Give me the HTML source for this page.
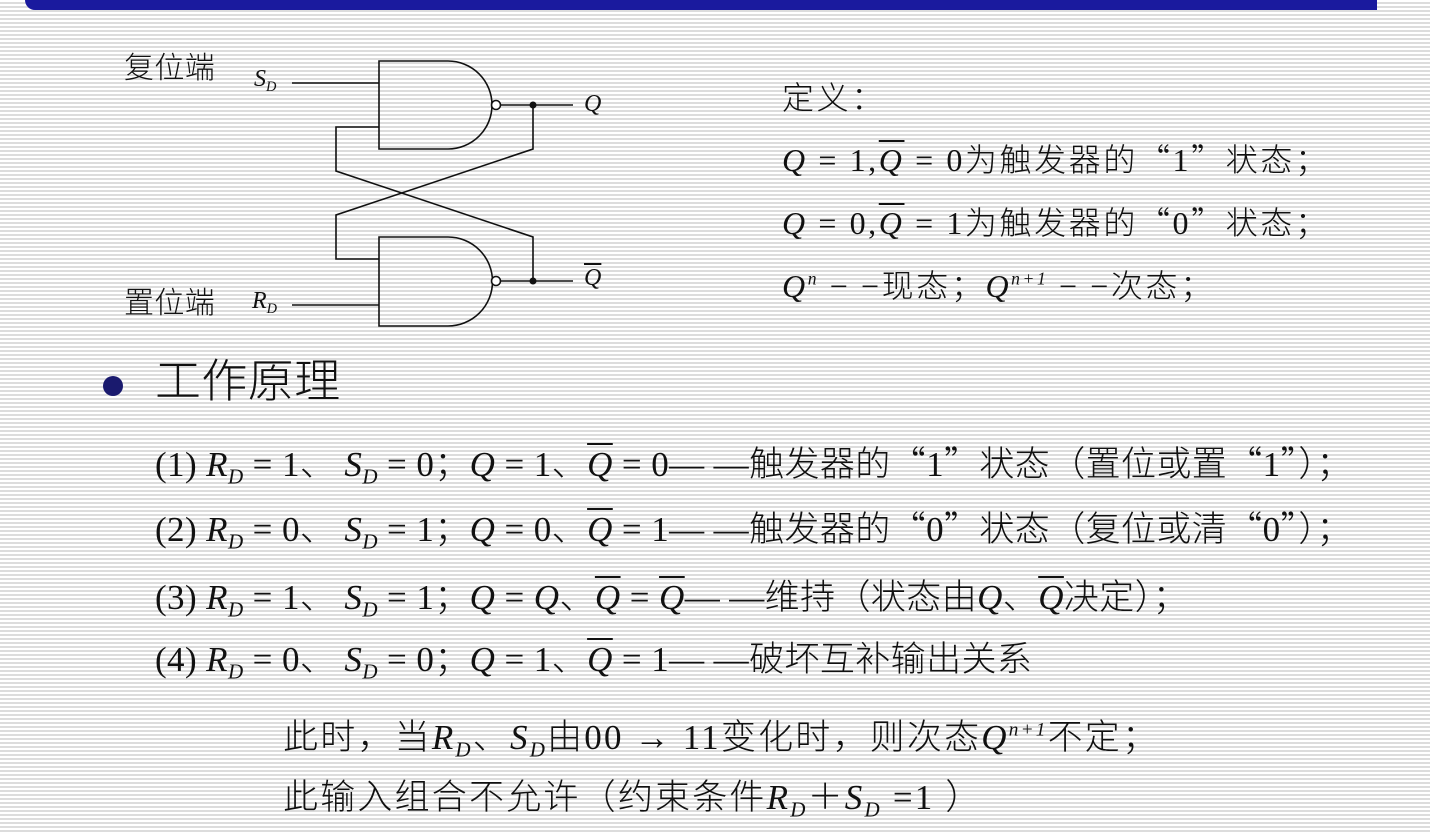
<!DOCTYPE html>
<html><head><meta charset="utf-8"><style>
html,body{margin:0;padding:0}
body{width:1430px;height:833px;overflow:hidden;position:relative;
background:repeating-linear-gradient(to bottom,#ffffff 0,#ffffff 2px,#dcdcdc 2px,#dcdcdc 4px);
font-family:"Liberation Serif","Noto Serif CJK SC",serif;color:#111}
.bar{position:absolute;left:25px;top:0;width:1352px;height:10px;background:#1a1a9e;border-bottom-left-radius:30px}
.t{position:absolute;white-space:nowrap;line-height:1}
.m{font-style:italic;font-family:"Liberation Serif",serif}
sub{font-size:0.6em;vertical-align:-0.35em;font-style:italic}
sup{font-size:0.55em;vertical-align:0.7em;font-style:italic}
.ob{text-decoration:overline;text-decoration-thickness:2px}
.c{font-family:"Liberation Serif","Noto Sans CJK SC",sans-serif;font-weight:300;letter-spacing:0.4px}
.k{font-family:"Noto Sans CJK SC",sans-serif}
.r{letter-spacing:2.6px}
.b{letter-spacing:2.2px}
</style></head><body>
<div class="bar"></div>
<div class="t c" style="left:124px;top:54px;font-size:30px">复位端</div>
<div class="t c" style="left:124px;top:289px;font-size:30px">置位端</div>
<svg style="position:absolute;left:0;top:0" width="1430" height="833">
<g fill="none" stroke="#111" stroke-width="1.6">
<path d="M448 61 H379 V149 H448 A44 44 0 0 0 448 61 Z"/>
<path d="M448 237 H379 V326 H448 A44.5 44.5 0 0 0 448 237 Z"/>
<circle cx="496" cy="105" r="4.5" fill="#fff"/>
<circle cx="496" cy="281" r="4.5" fill="#fff"/>
<path d="M292 83 H379 M500 105 H573 M500 281 H573 M292 305 H379"/>
<path d="M379 127 H336 V171 L533 237 V281"/>
<path d="M533 105 V149 L336 215 V259 H379"/>
</g>
<circle cx="533" cy="105" r="3.5" fill="#111"/>
<circle cx="533" cy="281" r="3.5" fill="#111"/>
</svg>
<div class="t m" style="left:254px;top:67px;font-size:24px">S<sub>D</sub></div>
<div class="t m" style="left:252px;top:289px;font-size:24px">R<sub>D</sub></div>
<div class="t m" style="left:584px;top:92px;font-size:24px">Q</div>
<div class="t m ob" style="left:584px;top:266px;font-size:24px">Q</div>

<div class="t c r" style="left:782px;top:80px;font-size:32px">定义<span class="k">：</span></div>
<div class="t c r" style="left:782px;top:142px;font-size:32px"><span class="m">Q</span> = 1,<span class="m ob">Q</span> = 0为触发器的<span class="k">“</span>1<span class="k">”</span>状态<span class="k">；</span></div>
<div class="t c r" style="left:782px;top:205px;font-size:32px"><span class="m">Q</span> = 0,<span class="m ob">Q</span> = 1为触发器的<span class="k">“</span>0<span class="k">”</span>状态<span class="k">；</span></div>
<div class="t c r" style="left:782px;top:268px;font-size:32px"><span class="m">Q<sup>n</sup></span> − −现态<span class="k">；</span><span class="m">Q<sup>n+1</sup></span> − −次态<span class="k">；</span></div>

<div style="position:absolute;left:103px;top:376px;width:20px;height:20px;border-radius:50%;background:#1a1a6e"></div>
<div class="t c" style="left:155px;top:359px;font-size:46px">工作原理</div>

<div class="t c" style="left:155px;top:444px;font-size:35px">(1) <span class="m">R<sub>D</sub></span> = 1、 <span class="m">S<sub>D</sub></span> = 0<span class="k">；</span><span class="m">Q</span> = 1、<span class="m ob">Q</span> = 0— —触发器的<span class="k">“</span>1<span class="k">”</span>状态<span class="k">（</span>置位或置<span class="k">“</span>1<span class="k">”）；</span></div>
<div class="t c" style="left:155px;top:509px;font-size:35px">(2) <span class="m">R<sub>D</sub></span> = 0、 <span class="m">S<sub>D</sub></span> = 1<span class="k">；</span><span class="m">Q</span> = 0、<span class="m ob">Q</span> = 1— —触发器的<span class="k">“</span>0<span class="k">”</span>状态<span class="k">（</span>复位或清<span class="k">“</span>0<span class="k">”）；</span></div>
<div class="t c" style="left:155px;top:577px;font-size:35px">(3) <span class="m">R<sub>D</sub></span> = 1、 <span class="m">S<sub>D</sub></span> = 1<span class="k">；</span><span class="m">Q</span> = <span class="m">Q</span>、<span class="m ob">Q</span> = <span class="m ob">Q</span>— —维持<span class="k">（</span>状态由<span class="m">Q</span>、<span class="m ob">Q</span>决定<span class="k">）；</span></div>
<div class="t c" style="left:155px;top:639px;font-size:35px">(4) <span class="m">R<sub>D</sub></span> = 0、 <span class="m">S<sub>D</sub></span> = 0<span class="k">；</span><span class="m">Q</span> = 1、<span class="m ob">Q</span> = 1— —破坏互补输出关系</div>

<div class="t c b" style="left:283px;top:717px;font-size:35px">此时<span class="k">，</span>当<span class="m">R<sub>D</sub></span>、<span class="m">S<sub>D</sub></span>由00 → 11变化时<span class="k">，</span>则次态<span class="m">Q<sup>n+1</sup></span>不定<span class="k">；</span></div>
<div class="t c b" style="left:283px;top:777px;font-size:35px">此输入组合不允许<span class="k">（</span>约束条件<span class="m">R<sub>D</sub></span>＋<span class="m">S<sub>D</sub></span> =1 <span class="k">）</span></div>
</body></html>
